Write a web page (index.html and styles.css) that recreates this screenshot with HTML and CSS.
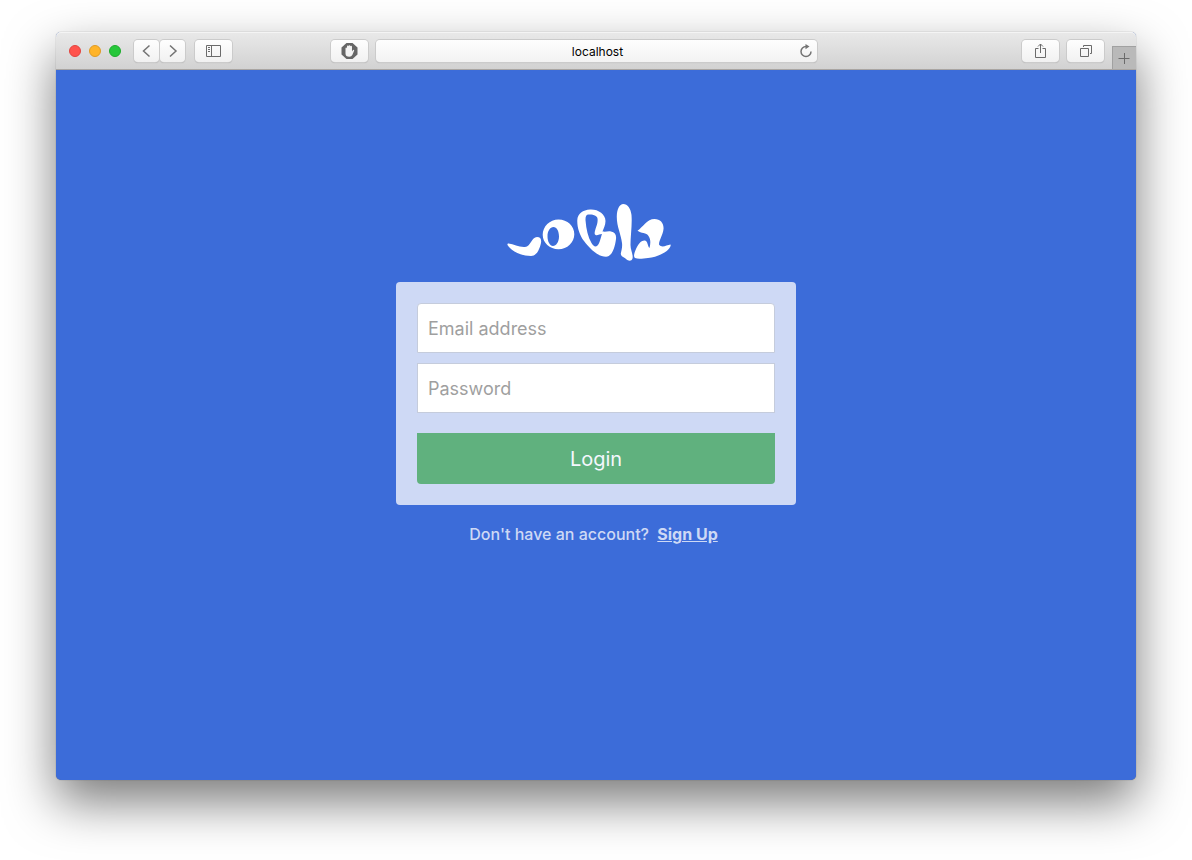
FILE: index.html
```html
<!DOCTYPE html>
<html lang="en">
<head>
<meta charset="utf-8">
<meta name="viewport" content="width=device-width, initial-scale=1">
<title>Jobla – Login</title>
<link rel="stylesheet" href="styles.css">
</head>
<body>
<div class="window">
  <header class="toolbar">
    <div class="lights">
      <button class="light light-close" aria-label="Close"></button>
      <button class="light light-min" aria-label="Minimize"></button>
      <button class="light light-max" aria-label="Zoom"></button>
    </div>
    <div class="nav">
      <button class="tool tool-half" aria-label="Back"><svg width="16" height="16" viewBox="0 0 16 16"><path d="M10.500 2.500 4.500 8l6 5.500"/></svg></button>
      <button class="tool tool-half" aria-label="Forward"><svg width="16" height="16" viewBox="0 0 16 16"><path d="M5 2.500 11 8l-6 5.500"/></svg></button>
    </div>
    <button class="tool" aria-label="Sidebar"><svg class="thin" width="17" height="12" viewBox="0 0 17 12"><path d="M1.500.5h14v11h-14zM6.500.5v11M3 2.500h2M3 4.500h2M3 6.500h2"/></svg></button>
    <div class="center">
      <button class="tool" aria-label="Content blocker"><svg class="blocker" width="17" height="18" viewBox="0 0 17 18"><path fill="#666" d="M5.500 1h6L16.500 5.500v7L11.500 17h-6L.5 12.500v-7z"/><path fill="#f4f4f4" d="M4.500 9.500V6.500q0-1 .7-1t.8 1V4.500q0-1 .8-1t.8.8q0-1 .9-1t.9 1q.1-.5.8-.5t.8 1v4.700l.8-1.300q.5-.8 1.200-.3.300.3 0 1L11.300 13q-.8 1.800-3 1.800-3.800 0-3.800-3.300z"/></svg></button>
      <div class="address">
        <input class="url" type="text" value="localhost" aria-label="Address">
        <button class="reload" aria-label="Reload"><svg width="14" height="14" viewBox="0 0 14 14"><path d="M7 2.500a5 5 0 1 0 5 5"/><path class="solid" d="M6.500 0v5.200L10.500 2.600z"/></svg></button>
      </div>
    </div>
    <div class="actions">
      <button class="tool" aria-label="Share"><svg class="thin" width="14" height="16" viewBox="0 0 14 16"><path d="M4.500 5.500h-3v9h10v-9h-3M6.500 10V1M4 3.500 6.500 1 9 3.500"/></svg></button>
      <button class="tool" aria-label="Show all tabs"><svg class="thin" width="14" height="14" viewBox="0 0 14 14"><path d="M1.500 4.500h8v8h-8zM4.500 3V1.500h8v8H11"/></svg></button>
    </div>
    <button class="newtab" aria-label="New tab"><svg class="thin" width="13" height="12" viewBox="0 0 13 12"><path d="M.5 6.500h11M6.500 1v11"/></svg></button>
  </header>
  <main class="page">
    <svg class="logo" width="166" height="60" viewBox="506 203 166 60" role="img" aria-label="Jobla">
      <path d="M508.500 243.500C514 244 519 247.500 525 247 531 246.500 531.500 237 537 237 541 237 542 240 540.500 245 539 250 536.500 256 531 256 521 256 511 251 507.500 245 507.300 244 507.500 243.500 508.500 243.500Z"/>
      <path fill-rule="evenodd" d="M558.500 219.500c9 0 15.800 6.500 15.800 14.700s-7 15-15.800 15-15.800-6.500-15.800-14.500 7-15.200 15.800-15.200Zm-5 7.500c-3.400 0-6 4-6 9.200s2.400 9.800 5.500 9.800 6-4 6-9.500-2.300-9.500-5.500-9.500Z"/>
      <path fill-rule="evenodd" d="M590 209.500C598 209 605.500 214 605.500 221 605.500 225 603.500 228.500 602.500 231.500 606 232 608 231 611 231.500 615 232 616.500 235 616 239 615.200 246 612.500 256.700 606 256.700 598 256.700 590 249 584 241 579.500 235 577 227 577.300 220 577.600 213.500 583 210 590 209.500ZM588.500 214.500C586 214.500 585.200 217 585.600 221 586.200 229 588 237 591.500 243 593.500 246.500 595.500 247.500 597.500 245.500 600 243 600.500 238 602 234 600 234 598 235.500 596 235.200 594 234.800 594.500 232 595.500 229 597 225 598 222 597.500 218.500 597 215 592 214.500 588.500 214.500Z"/>
      <path d="M623.300 204C627.500 204 630.800 208.500 631.500 215 632.300 225 630.500 236 630.500 245 630.500 250 633.500 255 632.500 258.500 631.500 261.500 628.500 261.300 626 259 624 257 620.500 256.500 620.800 253.500 621.500 250 622.500 247 622 243 621 234 616.500 226 616.800 216 617 209 619.500 204 623.300 204Z"/>
      <path d="M637.500 230.800C643 227 647 219 654.500 219 660.500 219 664 223.500 663.500 229 663 235 659 240 659 244.500 662 248.500 666.500 245 670.500 244.500 671.500 246 668 250.500 664.500 252.500 659 255.500 654 257.500 648 258 643.500 258.500 638 259.500 635 258 633 256.500 634.500 252.500 636 249 638 244.500 641 240 645 240.500 648 241.500 647.500 246 649.500 248 650.500 244 651 239.500 648.500 236 646.500 232.500 641 233.500 637.500 230.800Z"/>
    </svg>
    <form class="card">
      <input class="field field-first" type="email" placeholder="Email address" aria-label="Email address">
      <input class="field" type="password" placeholder="Password" aria-label="Password">
      <button class="login" type="submit">Login</button>
    </form>
    <p class="signup">Don't have an account? <a class="signup-link" href="#signup">Sign Up</a></p>
  </main>
</div>
</body>
</html>
```
FILE: styles.css
```css
* { box-sizing: border-box; }
body {
  margin: 0;
  padding: 32px 56px 80px;
  min-height: 100vh;
  display: flex;
  background: #fff;
  font-family: Inter, "Liberation Sans", sans-serif;
}
button, input { font-family: inherit; margin: 0; padding: 0; border: 0; }
.window {
  flex: 1;
  display: flex;
  flex-direction: column;
  border-radius: 5px;
  background: #3c6cd9;
  box-shadow: 0 0 1px rgba(0, 0, 0, .5), 0 22px 50px rgba(0, 0, 0, .52);
}
.toolbar {
  height: 38px;
  padding-left: 13px;
  display: flex;
  align-items: center;
  border-bottom: 1px solid #a9a5a2;
  border-radius: 5px 5px 0 0;
  background: linear-gradient(#e9e9e9, #d2d2d2);
  box-shadow: inset 0 1px #f4f4f4;
}
.lights { display: flex; gap: 8px; margin-right: 13px; }
.light { width: 12px; height: 12px; border-radius: 50%; border: 1px solid; }
.light-close { background: #ff534d; border-color: #e2443f; }
.light-min { background: #ffb429; border-color: #df9b24; }
.light-max { background: #26c73a; border-color: #1dac2c; }
.nav { display: flex; gap: 1px; margin-right: 10px; }
.tool {
  width: 37px;
  height: 22px;
  display: flex;
  align-items: center;
  justify-content: center;
  border-radius: 4px;
  background: linear-gradient(#fefefe, #f1f1f1);
  box-shadow: 0 0 0 1px #cbcbcb, 0 1px 1px #aaa;
}
.tool-half { width: 25px; }
.toolbar svg { flex: none; fill: none; stroke: #737373; stroke-width: 1.5; }
.toolbar .thin { stroke: #6b6b6b; stroke-width: 1; }
.toolbar .blocker { stroke: none; }
.center { flex: 1; display: flex; justify-content: center; gap: 8px; padding-right: 106px; }
.address {
  flex: 0 1 441px;
  position: relative;
  display: flex;
  border-radius: 4px;
  background: linear-gradient(#fefefe, #f3f3f3);
  box-shadow: 0 0 0 1px #cbcbcb, 0 1px 1px #aaa;
}
.url { width: 100%; height: 22px; padding: 1px 0 0 2px; background: none; text-align: center; font-size: 12px; color: #000; }
.reload { position: absolute; right: 4px; top: 4px; width: 14px; height: 14px; background: none; }
.toolbar .reload svg { display: block; stroke-width: 1.5; }
.toolbar .reload .solid { fill: #737373; stroke: none; }
.actions { display: flex; gap: 8px; margin-right: 8px; }
.newtab {
  width: 24px;
  height: 23px;
  align-self: flex-end;
  display: flex;
  align-items: center;
  justify-content: center;
  background: #b9b9b9;
  border: solid #a1a1a1;
  border-width: 1px 0 0 1px;
}
.page { padding: 133px 20px 40px; display: flex; flex-direction: column; align-items: center; }
.logo { fill: #fff; margin-right: 14px; }
.card {
  width: 100%;
  max-width: 400px;
  margin-top: 19px;
  padding: 21px;
  display: flex;
  flex-direction: column;
  gap: 10px;
  border-radius: 4px;
  background: #ced9f5;
}
.field {
  height: 50px;
  padding: 0 10px;
  border: 1px solid #c5ccdc;
  background: #fff;
  font-size: 18px;
  color: #333;
}
.field-first { border-radius: 4px 4px 0 0; }
.field::placeholder { color: #9f9f9f; opacity: 1; }
.login {
  height: 51px;
  margin-top: 10px;
  border-radius: 0 0 4px 4px;
  background: #60b17e;
  color: #f4f7fd;
  font-size: 20px;
}
.signup { margin: 19px 5px 0 0; font-size: 16px; line-height: 20px; font-weight: 500; color: #ced9f5; }
.signup-link { margin-left: 4px; color: inherit; font-weight: 700; }
```
